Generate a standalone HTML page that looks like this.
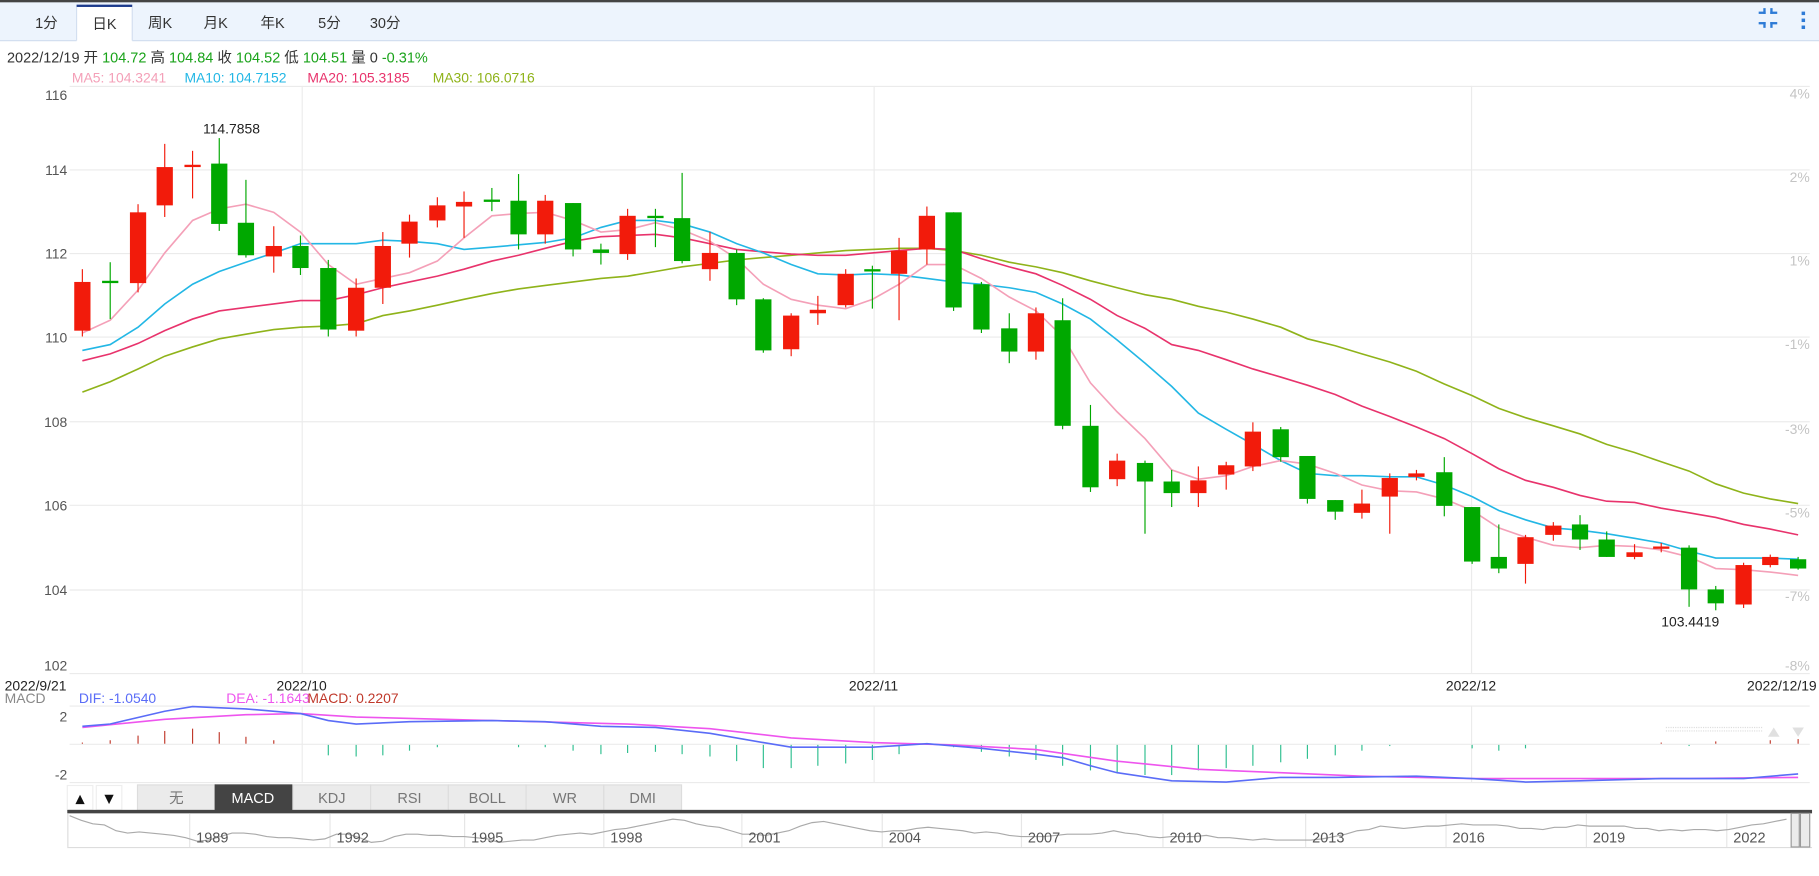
<!DOCTYPE html>
<html><head><meta charset="utf-8"><style>
html,body{margin:0;padding:0;background:#fff;overflow:hidden}
svg{display:block}
text{font-family:"Liberation Sans","Noto Sans CJK SC",sans-serif}
</style></head><body>
<svg width="1819" height="876" viewBox="0 0 1568 755" preserveAspectRatio="none" xmlns="http://www.w3.org/2000/svg">
<rect width="1568" height="755" fill="#fff"/>
<rect x="0" y="0" width="1568" height="35" fill="#edf4fd"/>
<rect x="0" y="0" width="1568" height="2" fill="#444"/>
<line x1="0" y1="35" x2="1568" y2="35" stroke="#d3dff0"/>
<rect x="66" y="4" width="48" height="32" fill="#fff"/>
<rect x="66" y="4" width="48" height="2" fill="#1c3a8c"/>
<line x1="66" y1="6" x2="66" y2="35" stroke="#d3dff0"/><line x1="114" y1="6" x2="114" y2="35" stroke="#d3dff0"/>
<g font-size="12.5" fill="#333" text-anchor="middle">
<text x="40" y="24">1分</text><text x="90" y="25">日K</text><text x="138" y="24">周K</text><text x="186" y="24">月K</text><text x="235" y="24">年K</text><text x="284" y="24">5分</text><text x="332" y="24">30分</text>
</g>
<g fill="#2e7bd6">
<rect x="1516" y="10" width="6" height="2"/><rect x="1520" y="7" width="2" height="5"/>
<rect x="1526" y="10" width="6" height="2"/><rect x="1526" y="7" width="2" height="5"/>
<rect x="1516" y="19" width="6" height="2"/><rect x="1520" y="19" width="2" height="5"/>
<rect x="1526" y="19" width="6" height="2"/><rect x="1526" y="19" width="2" height="5"/>
<rect x="1553" y="10" width="3" height="3"/><rect x="1553" y="16" width="3" height="3"/><rect x="1553" y="22" width="3" height="3"/>
</g>
<text x="6" y="54" font-size="12.5" fill="#333">2022/12/19 开 <tspan fill="#1aa31a">104.72</tspan> 高 <tspan fill="#1aa31a">104.84</tspan> 收 <tspan fill="#1aa31a">104.52</tspan> 低 <tspan fill="#1aa31a">104.51</tspan> 量 0 <tspan fill="#1aa31a">-0.31%</tspan></text>
<text x="62" y="71" font-size="12" fill="#f4a0b8">MA5: 104.3241</text>
<text x="159" y="71" font-size="12" fill="#23b7e5">MA10: 104.7152</text>
<text x="265" y="71" font-size="12" fill="#e8336c">MA20: 105.3185</text>
<text x="373" y="71" font-size="12" fill="#8fb31a">MA30: 106.0716</text>
<g stroke="#ebebeb" stroke-width="1">
<line x1="60" y1="74.5" x2="1560" y2="74.5"/><line x1="60" y1="146.5" x2="1560" y2="146.5"/><line x1="60" y1="218.5" x2="1560" y2="218.5"/><line x1="60" y1="290.5" x2="1560" y2="290.5"/><line x1="60" y1="363.5" x2="1560" y2="363.5"/><line x1="60" y1="435.5" x2="1560" y2="435.5"/><line x1="60" y1="508.5" x2="1560" y2="508.5"/><line x1="60" y1="580.5" x2="1560" y2="580.5"/>
<line x1="260.5" y1="74" x2="260.5" y2="580"/><line x1="753.5" y1="74" x2="753.5" y2="580"/><line x1="1268.5" y1="74" x2="1268.5" y2="580"/>
<line x1="60" y1="608.5" x2="1560" y2="608.5"/><line x1="60" y1="641.5" x2="1560" y2="641.5"/><line x1="60" y1="674.5" x2="1560" y2="674.5"/>
<line x1="260.5" y1="608" x2="260.5" y2="674"/><line x1="753.5" y1="608" x2="753.5" y2="674"/><line x1="1268.5" y1="608" x2="1268.5" y2="674"/>
</g>
<g font-size="12" fill="#555" text-anchor="end">
<text x="58" y="86">116</text><text x="58" y="151">114</text><text x="58" y="223">112</text><text x="58" y="295">110</text><text x="58" y="368">108</text><text x="58" y="440">106</text><text x="58" y="513">104</text><text x="58" y="578">102</text>
<text x="58" y="622">2</text><text x="58" y="672">-2</text>
</g>
<g font-size="12" fill="#c4c4c4" text-anchor="end">
<text x="1560" y="85">4%</text><text x="1560" y="157">2%</text><text x="1560" y="229">1%</text><text x="1560" y="301">-1%</text><text x="1560" y="374">-3%</text><text x="1560" y="446">-5%</text><text x="1560" y="518">-7%</text><text x="1560" y="578">-8%</text>
</g>
<g font-size="12" fill="#222">
<text x="4" y="595">2022/9/21</text><text x="260" y="595" text-anchor="middle">2022/10</text><text x="753" y="595" text-anchor="middle">2022/11</text><text x="1268" y="595" text-anchor="middle">2022/12</text><text x="1566" y="595" text-anchor="end">2022/12/19</text>
</g>
<text x="4" y="606" font-size="12" fill="#888">MACD</text>
<text x="68" y="606" font-size="12" fill="#5a6cf7">DIF: -1.0540</text>
<text x="195" y="606" font-size="12" fill="#ee55ee">DEA: -1.1643</text>
<text x="265" y="606" font-size="12" fill="#c0392b">MACD: 0.2207</text>
<line x1="1436" y1="627" x2="1520" y2="627" stroke="#ddd" stroke-dasharray="1,1"/>
<line x1="1436" y1="630" x2="1520" y2="630" stroke="#ddd" stroke-dasharray="1,1"/>
<polygon points="1524,635 1529,627 1534,635" fill="#e0e0e0"/>
<polygon points="1545,627 1555,627 1550,635" fill="#e0e0e0"/>
<g fill="none" stroke-width="1.4">
<polyline stroke="#8fb31a" points="71,338 95,329 119,318 142,307 166,299 189,292 212,288 236,284 259,282 283,281 307,279 330,272 353,268 377,263 400,258 424,253 447,249 470,246 494,243 518,240 541,238 565,234 588,230 612,227 635,224 658,222 682,220 705,218 729,216 752,215 775,214 799,214 822,216 846,220 870,226 893,230 916,235 940,242 963,248 987,254 1010,258 1033,264 1057,269 1080,275 1104,282 1127,292 1151,298 1174,305 1198,312 1221,320 1245,331 1269,341 1292,352 1315,360 1339,367 1362,374 1385,383 1409,390 1432,398 1456,406 1479,417 1503,425 1526,430 1550,434"/>
<polyline stroke="#e8336c" points="71,311 95,305 119,296 142,285 166,275 189,268 212,265 236,262 259,259 283,259 307,254 330,248 353,243 377,238 400,232 424,225 447,220 470,214 494,208 518,204 541,203 565,202 588,205 612,210 635,215 658,217 682,219 705,220 729,220 752,218 775,216 799,214 822,215 846,223 870,230 893,236 916,246 940,258 963,272 987,283 1010,297 1033,302 1057,310 1080,318 1104,325 1127,332 1151,340 1174,350 1198,359 1221,368 1245,378 1269,391 1292,404 1315,414 1339,420 1362,427 1385,432 1409,433 1432,438 1456,442 1479,446 1503,452 1526,456 1550,461"/>
<polyline stroke="#23b7e5" points="71,302 95,297 119,282 142,262 166,245 189,234 212,226 236,218 259,210 283,210 307,210 330,207 353,208 377,210 400,215 424,213 447,211 470,209 494,205 518,196 541,190 565,190 588,193 612,200 635,210 658,218 682,228 705,236 729,237 752,236 775,237 799,240 822,243 846,245 870,248 893,252 916,262 940,275 963,293 987,313 1010,333 1033,356 1057,370 1080,383 1104,397 1127,408 1151,410 1174,410 1198,411 1221,411 1245,418 1269,428 1292,440 1315,448 1339,455 1362,457 1385,460 1409,464 1432,468 1456,475 1479,481 1503,481 1526,481 1550,482"/>
<polyline stroke="#f4a0b8" points="71,287 95,276 119,250 142,218 166,190 189,180 212,176 236,183 259,200 283,228 307,245 330,240 353,235 377,225 400,205 424,186 447,184 470,183 494,190 518,200 541,198 565,192 588,198 612,208 635,223 658,245 682,258 705,263 729,266 752,258 775,245 799,228 822,228 846,240 870,256 893,268 916,290 940,330 963,355 987,378 1010,405 1033,413 1057,410 1080,402 1104,397 1127,400 1151,408 1174,418 1198,423 1221,424 1245,430 1269,440 1292,455 1315,463 1339,470 1362,472 1385,470 1409,471 1432,474 1456,480 1479,490 1503,491 1526,493 1550,496"/>
</g>
<g fill="#f21b0b" stroke="#f21b0b">
<line x1="71" y1="232" x2="71" y2="290"/><rect x="64" y="243" width="14" height="42" stroke="none"/>
<line x1="119" y1="176" x2="119" y2="252"/><rect x="112" y="183" width="14" height="61" stroke="none"/>
<line x1="142" y1="124" x2="142" y2="187"/><rect x="135" y="144" width="14" height="33" stroke="none"/>
<line x1="166" y1="130" x2="166" y2="171"/><rect x="159" y="142" width="14" height="2" stroke="none"/>
<line x1="236" y1="195" x2="236" y2="235"/><rect x="229" y="212" width="14" height="9" stroke="none"/>
<line x1="307" y1="240" x2="307" y2="290"/><rect x="300" y="248" width="14" height="37" stroke="none"/>
<line x1="330" y1="200" x2="330" y2="262"/><rect x="323" y="212" width="14" height="36" stroke="none"/>
<line x1="353" y1="185" x2="353" y2="222"/><rect x="346" y="191" width="14" height="19" stroke="none"/>
<line x1="377" y1="170" x2="377" y2="196"/><rect x="370" y="177" width="14" height="13" stroke="none"/>
<line x1="400" y1="165" x2="400" y2="205"/><rect x="393" y="174" width="14" height="4" stroke="none"/>
<line x1="470" y1="168" x2="470" y2="210"/><rect x="463" y="173" width="14" height="29" stroke="none"/>
<line x1="541" y1="180" x2="541" y2="224"/><rect x="534" y="186" width="14" height="33" stroke="none"/>
<line x1="612" y1="200" x2="612" y2="242"/><rect x="605" y="218" width="14" height="14" stroke="none"/>
<line x1="682" y1="270" x2="682" y2="307"/><rect x="675" y="272" width="14" height="29" stroke="none"/>
<line x1="705" y1="255" x2="705" y2="280"/><rect x="698" y="267" width="14" height="3" stroke="none"/>
<line x1="729" y1="232" x2="729" y2="265"/><rect x="722" y="236" width="14" height="27" stroke="none"/>
<line x1="775" y1="205" x2="775" y2="276"/><rect x="768" y="216" width="14" height="20" stroke="none"/>
<line x1="799" y1="178" x2="799" y2="228"/><rect x="792" y="186" width="14" height="29" stroke="none"/>
<line x1="893" y1="265" x2="893" y2="310"/><rect x="886" y="270" width="14" height="33" stroke="none"/>
<line x1="963" y1="391" x2="963" y2="419"/><rect x="956" y="397" width="14" height="16" stroke="none"/>
<line x1="1033" y1="402" x2="1033" y2="437"/><rect x="1026" y="414" width="14" height="11" stroke="none"/>
<line x1="1057" y1="398" x2="1057" y2="422"/><rect x="1050" y="401" width="14" height="8" stroke="none"/>
<line x1="1080" y1="364" x2="1080" y2="406"/><rect x="1073" y="372" width="14" height="30" stroke="none"/>
<line x1="1174" y1="422" x2="1174" y2="447"/><rect x="1167" y="434" width="14" height="8" stroke="none"/>
<line x1="1198" y1="408" x2="1198" y2="460"/><rect x="1191" y="412" width="14" height="16" stroke="none"/>
<line x1="1221" y1="405" x2="1221" y2="414"/><rect x="1214" y="408" width="14" height="3" stroke="none"/>
<line x1="1315" y1="461" x2="1315" y2="503"/><rect x="1308" y="463" width="14" height="23" stroke="none"/>
<line x1="1339" y1="450" x2="1339" y2="466"/><rect x="1332" y="453" width="14" height="8" stroke="none"/>
<line x1="1409" y1="469" x2="1409" y2="482"/><rect x="1402" y="476" width="14" height="4" stroke="none"/>
<line x1="1432" y1="468" x2="1432" y2="476"/><rect x="1425" y="471" width="14" height="2" stroke="none"/>
<line x1="1503" y1="485" x2="1503" y2="524"/><rect x="1496" y="487" width="14" height="34" stroke="none"/>
<line x1="1526" y1="478" x2="1526" y2="489"/><rect x="1519" y="480" width="14" height="7" stroke="none"/>
</g>
<g fill="#00a800" stroke="#00a800">
<line x1="95" y1="226" x2="95" y2="275"/><rect x="88" y="242" width="14" height="2" stroke="none"/>
<line x1="189" y1="119" x2="189" y2="199"/><rect x="182" y="141" width="14" height="52" stroke="none"/>
<line x1="212" y1="155" x2="212" y2="222"/><rect x="205" y="192" width="14" height="28" stroke="none"/>
<line x1="259" y1="203" x2="259" y2="237"/><rect x="252" y="212" width="14" height="19" stroke="none"/>
<line x1="283" y1="224" x2="283" y2="290"/><rect x="276" y="231" width="14" height="53" stroke="none"/>
<line x1="424" y1="162" x2="424" y2="182"/><rect x="417" y="172" width="14" height="2" stroke="none"/>
<line x1="447" y1="150" x2="447" y2="215"/><rect x="440" y="173" width="14" height="29" stroke="none"/>
<line x1="494" y1="175" x2="494" y2="221"/><rect x="487" y="175" width="14" height="40" stroke="none"/>
<line x1="518" y1="210" x2="518" y2="228"/><rect x="511" y="215" width="14" height="3" stroke="none"/>
<line x1="565" y1="180" x2="565" y2="213"/><rect x="558" y="186" width="14" height="2" stroke="none"/>
<line x1="588" y1="149" x2="588" y2="227"/><rect x="581" y="188" width="14" height="37" stroke="none"/>
<line x1="635" y1="215" x2="635" y2="263"/><rect x="628" y="218" width="14" height="40" stroke="none"/>
<line x1="658" y1="257" x2="658" y2="304"/><rect x="651" y="258" width="14" height="44" stroke="none"/>
<line x1="752" y1="229" x2="752" y2="266"/><rect x="745" y="232" width="14" height="2" stroke="none"/>
<line x1="822" y1="183" x2="822" y2="268"/><rect x="815" y="183" width="14" height="82" stroke="none"/>
<line x1="846" y1="243" x2="846" y2="287"/><rect x="839" y="245" width="14" height="39" stroke="none"/>
<line x1="870" y1="270" x2="870" y2="313"/><rect x="863" y="283" width="14" height="20" stroke="none"/>
<line x1="916" y1="257" x2="916" y2="370"/><rect x="909" y="276" width="14" height="91" stroke="none"/>
<line x1="940" y1="349" x2="940" y2="424"/><rect x="933" y="367" width="14" height="53" stroke="none"/>
<line x1="987" y1="397" x2="987" y2="460"/><rect x="980" y="399" width="14" height="16" stroke="none"/>
<line x1="1010" y1="405" x2="1010" y2="437"/><rect x="1003" y="415" width="14" height="10" stroke="none"/>
<line x1="1104" y1="368" x2="1104" y2="398"/><rect x="1097" y="370" width="14" height="24" stroke="none"/>
<line x1="1127" y1="393" x2="1127" y2="434"/><rect x="1120" y="393" width="14" height="37" stroke="none"/>
<line x1="1151" y1="431" x2="1151" y2="448"/><rect x="1144" y="431" width="14" height="10" stroke="none"/>
<line x1="1245" y1="394" x2="1245" y2="445"/><rect x="1238" y="407" width="14" height="29" stroke="none"/>
<line x1="1269" y1="437" x2="1269" y2="486"/><rect x="1262" y="437" width="14" height="47" stroke="none"/>
<line x1="1292" y1="452" x2="1292" y2="494"/><rect x="1285" y="480" width="14" height="10" stroke="none"/>
<line x1="1362" y1="444" x2="1362" y2="474"/><rect x="1355" y="452" width="14" height="13" stroke="none"/>
<line x1="1385" y1="458" x2="1385" y2="480"/><rect x="1378" y="465" width="14" height="15" stroke="none"/>
<line x1="1456" y1="470" x2="1456" y2="523"/><rect x="1449" y="472" width="14" height="36" stroke="none"/>
<line x1="1479" y1="505" x2="1479" y2="526"/><rect x="1472" y="508" width="14" height="12" stroke="none"/>
<line x1="1550" y1="480" x2="1550" y2="491"/><rect x="1543" y="482" width="14" height="8" stroke="none"/>
</g>
<text x="175" y="115" font-size="12" fill="#222">114.7858</text>
<text x="1432" y="540" font-size="12" fill="#222">103.4419</text>
<g stroke="#c0392b" stroke-width="1">
<line x1="71" y1="641" x2="71" y2="640"/><line x1="95" y1="641" x2="95" y2="638"/><line x1="119" y1="641" x2="119" y2="634"/><line x1="142" y1="641" x2="142" y2="630"/><line x1="166" y1="641" x2="166" y2="628"/><line x1="189" y1="641" x2="189" y2="631"/><line x1="212" y1="641" x2="212" y2="635"/><line x1="236" y1="641" x2="236" y2="638"/>
<line x1="1432" y1="641" x2="1432" y2="640"/><line x1="1479" y1="641" x2="1479" y2="639"/><line x1="1526" y1="641" x2="1526" y2="638"/><line x1="1550" y1="641" x2="1550" y2="637"/>
</g>
<g stroke="#2ebf8f" stroke-width="1">
<line x1="283" y1="642" x2="283" y2="651"/><line x1="307" y1="642" x2="307" y2="652"/><line x1="330" y1="642" x2="330" y2="651"/><line x1="353" y1="642" x2="353" y2="647"/><line x1="377" y1="642" x2="377" y2="644"/><line x1="447" y1="642" x2="447" y2="644"/><line x1="470" y1="642" x2="470" y2="644"/><line x1="494" y1="642" x2="494" y2="647"/><line x1="518" y1="642" x2="518" y2="650"/><line x1="541" y1="642" x2="541" y2="649"/><line x1="565" y1="642" x2="565" y2="648"/><line x1="588" y1="642" x2="588" y2="650"/><line x1="612" y1="642" x2="612" y2="652"/><line x1="635" y1="642" x2="635" y2="656"/><line x1="658" y1="642" x2="658" y2="662"/><line x1="682" y1="642" x2="682" y2="662"/><line x1="705" y1="642" x2="705" y2="660"/><line x1="729" y1="642" x2="729" y2="658"/><line x1="752" y1="642" x2="752" y2="655"/><line x1="775" y1="642" x2="775" y2="650"/><line x1="822" y1="642" x2="822" y2="644"/><line x1="846" y1="642" x2="846" y2="648"/><line x1="870" y1="642" x2="870" y2="652"/><line x1="893" y1="642" x2="893" y2="655"/><line x1="916" y1="642" x2="916" y2="660"/><line x1="940" y1="642" x2="940" y2="664"/><line x1="963" y1="642" x2="963" y2="666"/><line x1="987" y1="642" x2="987" y2="668"/><line x1="1010" y1="642" x2="1010" y2="668"/><line x1="1033" y1="642" x2="1033" y2="664"/><line x1="1057" y1="642" x2="1057" y2="662"/><line x1="1080" y1="642" x2="1080" y2="660"/><line x1="1104" y1="642" x2="1104" y2="657"/><line x1="1127" y1="642" x2="1127" y2="654"/><line x1="1151" y1="642" x2="1151" y2="651"/><line x1="1174" y1="642" x2="1174" y2="647"/><line x1="1198" y1="642" x2="1198" y2="643"/><line x1="1269" y1="642" x2="1269" y2="645"/><line x1="1292" y1="642" x2="1292" y2="647"/><line x1="1315" y1="642" x2="1315" y2="645"/><line x1="1456" y1="642" x2="1456" y2="643"/>
</g>
<g fill="none" stroke-width="1.4">
<polyline stroke="#ee55ee" points="71,627 142,620 212,616 259,615 307,618 424,621 541,624 612,628 682,636 752,640 822,642 893,646 963,656 1033,663 1104,666 1174,669 1269,671 1362,671 1456,671 1550,670"/>
<polyline stroke="#5a6cf7" points="71,626 95,624 142,613 166,609 190,610 212,611 259,615 283,621 307,624 353,622 424,621 470,622 518,626 565,627 612,632 658,640 682,644 752,644 799,641 846,645 893,650 916,653 940,660 963,666 1010,673 1057,674 1104,670 1151,670 1221,669 1269,671 1315,674 1362,673 1432,671 1503,671 1550,667"/>
</g>
<rect x="58" y="677" width="22" height="21" fill="#fff" stroke="#eee"/>
<rect x="83" y="677" width="22" height="21" fill="#fff" stroke="#eee"/>
<polygon points="65,693 69,685 73,693" fill="#111"/>
<polygon points="90,685 98,685 94,693" fill="#111"/>
<g stroke="#ddd" fill="#ebebeb">
<rect x="118.5" y="676.5" width="67" height="22"/><rect x="252.5" y="676.5" width="67" height="22"/><rect x="319.5" y="676.5" width="67" height="22"/><rect x="386.5" y="676.5" width="67" height="22"/><rect x="453.5" y="676.5" width="67" height="22"/><rect x="520.5" y="676.5" width="67" height="22"/>
</g>
<rect x="185" y="676" width="67" height="23" fill="#444"/>
<g font-size="12.5" fill="#777" text-anchor="middle">
<text x="152" y="692">无</text><text x="218" y="692" fill="#fff">MACD</text><text x="286" y="692">KDJ</text><text x="353" y="692">RSI</text><text x="420" y="692">BOLL</text><text x="487" y="692">WR</text><text x="554" y="692">DMI</text>
</g>
<rect x="58" y="698" width="1504" height="3" fill="#444"/>
<line x1="58" y1="730.5" x2="1562" y2="730.5" stroke="#ddd"/>
<line x1="58.5" y1="701" x2="58.5" y2="730" stroke="#ddd"/>
<g stroke="#e6e6e6">
<line x1="163.5" y1="701" x2="163.5" y2="730"/><line x1="284.5" y1="701" x2="284.5" y2="730"/><line x1="400.5" y1="701" x2="400.5" y2="730"/><line x1="520.5" y1="701" x2="520.5" y2="730"/><line x1="639.5" y1="701" x2="639.5" y2="730"/><line x1="760.5" y1="701" x2="760.5" y2="730"/><line x1="880.5" y1="701" x2="880.5" y2="730"/><line x1="1002.5" y1="701" x2="1002.5" y2="730"/><line x1="1125.5" y1="701" x2="1125.5" y2="730"/><line x1="1246.5" y1="701" x2="1246.5" y2="730"/><line x1="1367.5" y1="701" x2="1367.5" y2="730"/><line x1="1488.5" y1="701" x2="1488.5" y2="730"/>
</g>
<polyline fill="none" stroke="#aaa" stroke-width="1" points="60,703 70,707 80,710 90,711 100,716 110,718 120,717 130,718 140,719 150,720 160,722 170,725 180,724 190,721 200,718 210,718 220,719 230,721 240,722 250,722 260,723 270,724 280,723 290,719 300,719 310,722 320,726 330,725 340,721 350,719 360,719 370,720 380,720 390,721 400,721 410,722 420,723 430,726 440,725 450,724 460,724 470,722 480,720 490,719 500,718 510,719 520,717 530,715 540,714 550,712 560,710 570,708 580,706 590,707 600,710 610,712 620,713 630,716 640,719 650,719 660,720 670,718 680,716 690,712 700,709 710,708 720,710 730,712 740,714 750,716 760,717 770,716 780,716 790,714 800,713 810,714 820,715 830,716 840,718 850,717 860,718 870,720 880,721 890,721 900,721 910,720 920,719 930,719 940,719 950,718 960,716 970,718 980,719 990,721 1000,722 1010,721 1020,721 1030,721 1040,720 1050,722 1060,722 1070,723 1080,724 1090,723 1100,724 1110,724 1120,724 1130,724 1140,723 1150,721 1160,719 1170,716 1180,715 1190,712 1200,713 1210,714 1220,713 1230,712 1240,712 1250,711 1260,710 1270,711 1280,711 1290,711 1300,712 1310,714 1320,714 1330,715 1340,713 1350,713 1360,711 1370,712 1380,712 1390,712 1400,712 1410,714 1420,714 1430,716 1440,715 1450,716 1460,715 1470,715 1480,716 1490,715 1500,713 1510,711 1520,710 1530,708 1540,706"/>
<g font-size="12.5" fill="#555" text-anchor="middle">
<text x="183" y="726">1989</text><text x="304" y="726">1992</text><text x="420" y="726">1995</text><text x="540" y="726">1998</text><text x="659" y="726">2001</text><text x="780" y="726">2004</text><text x="900" y="726">2007</text><text x="1022" y="726">2010</text><text x="1145" y="726">2013</text><text x="1266" y="726">2016</text><text x="1387" y="726">2019</text><text x="1508" y="726">2022</text>
</g>
<rect x="1544" y="701" width="7" height="29" fill="#ebebeb" stroke="#999"/>
<rect x="1552" y="701" width="8" height="29" fill="#ebebeb" stroke="#999"/>
</svg>
</body></html>
